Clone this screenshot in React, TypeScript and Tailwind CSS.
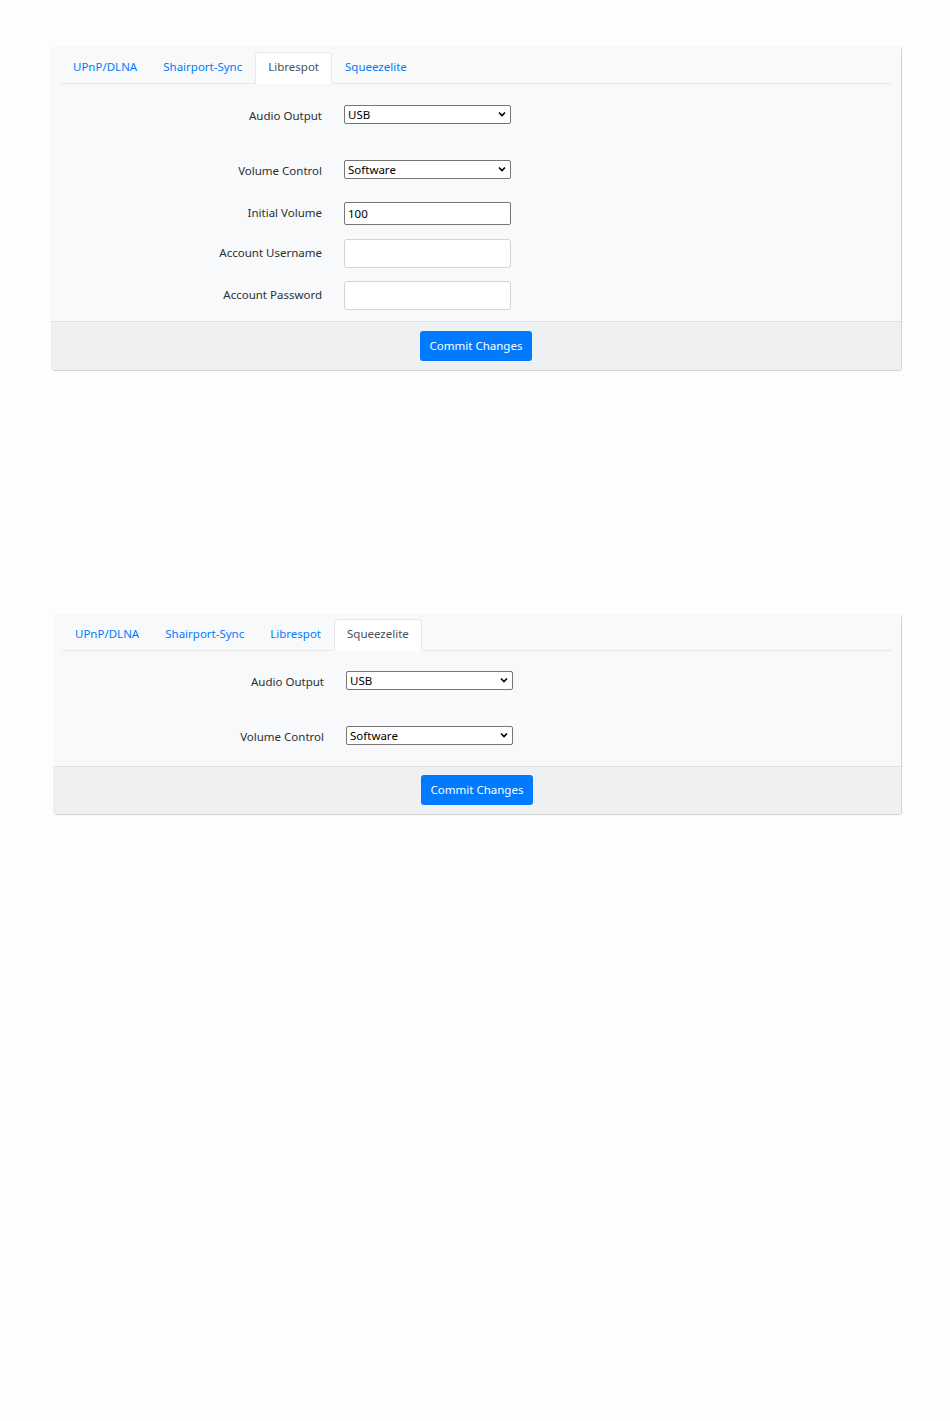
import React from 'react';

const TABS = ['UPnP/DLNA', 'Shairport-Sync', 'Librespot', 'Squeezelite'];

function Select({ value }: { value: string }) {
  return (
    <div className="relative w-[167px] h-[19px] mb-[3px]">
      <select
        defaultValue={value}
        className="appearance-none w-full h-full bg-white border border-[#767676] rounded-[2px] pl-[3px] text-[11.5px] leading-[17px] text-black"
      >
        <option>{value}</option>
      </select>
      <svg
        className="absolute right-[5px] top-[6px] pointer-events-none"
        width="8"
        height="6"
        viewBox="0 0 8 6"
      >
        <path d="M1 1.5 L4 4.5 L7 1.5" fill="none" stroke="#000" strokeWidth="1.6" />
      </svg>
    </div>
  );
}

function Row({ label, children, className }: { label: string; children: React.ReactNode; className: string }) {
  return (
    <div className={`flex items-center h-[30px] ${className}`}>
      <div className="w-[262px] text-right text-[#2b2f33]">{label}</div>
      <div className="ml-[22px]">{children}</div>
    </div>
  );
}

function Card({ active, children, footerClass, className, topClass }: { active: string; children: React.ReactNode; footerClass: string; className: string; topClass: string }) {
  return (
    <div className={`bg-[#f8f9fa] rounded-[3px] shadow-[1px_1px_1px_rgba(0,0,0,0.18)] ${className}`}>
      <div className={`px-[9px] ${topClass}`}>
        <div className="flex border-b border-[#e6e8ea] h-[32px]">
          {TABS.map((t) => (
            <div
              key={t}
              className={`px-[12px] pb-[2px] h-[32px] -mb-px flex items-center rounded-t-[4px] border ${
                t === active
                  ? 'bg-white border-[#e6e8ea] border-b-white text-[#495057]'
                  : 'border-transparent text-[#007bff]'
              }`}
            >
              {t}
            </div>
          ))}
        </div>
        {children}
      </div>
      <div className={`bg-[#eff0f2] border-t border-[#dfe1e3] flex justify-center ${footerClass}`}>
        <button className="bg-[#007bff] text-white rounded-[3px] h-[30px] px-[10px]">Commit Changes</button>
      </div>
    </div>
  );
}

export default function App() {
  return (
    <div className="min-h-[1421px] bg-[#fdfdfd] text-[11.5px] font-['Noto_Sans','Open_Sans',sans-serif] pt-[46px]">
      <Card active="Librespot" className="ml-[51px] w-[850px]" topClass="pt-[6px]" footerClass="pt-[9px] pb-[9px]">
        <div className="pb-[11px]">
          <Row label="Audio Output" className="mt-[17px]">
            <Select value="USB" />
          </Row>
          <Row label="Volume Control" className="mt-[25px]">
            <Select value="Software" />
          </Row>
          <Row label="Initial Volume" className="mt-[12px]">
            <input
              defaultValue="100"
              className="w-[167px] h-[23px] bg-white border border-[#767676] rounded-[2px] px-[3px] text-black"
            />
          </Row>
          <Row label="Account Username" className="mt-[10px]">
            <input className="w-[167px] h-[29px] bg-white border border-[#ced4da] rounded-[3px] px-[6px]" />
          </Row>
          <Row label="Account Password" className="mt-[12px]">
            <input type="password" className="w-[167px] h-[29px] bg-white border border-[#ced4da] rounded-[3px] px-[6px]" />
          </Row>
        </div>
      </Card>

      <Card active="Squeezelite" className="ml-[53px] w-[848px] mt-[244px]" topClass="pt-[5px]" footerClass="pt-[8px] pb-[9px]">
        <div className="pb-[14px]">
          <Row label="Audio Output" className="mt-[16px]">
            <Select value="USB" />
          </Row>
          <Row label="Volume Control" className="mt-[25px]">
            <Select value="Software" />
          </Row>
        </div>
      </Card>
    </div>
  );
}
